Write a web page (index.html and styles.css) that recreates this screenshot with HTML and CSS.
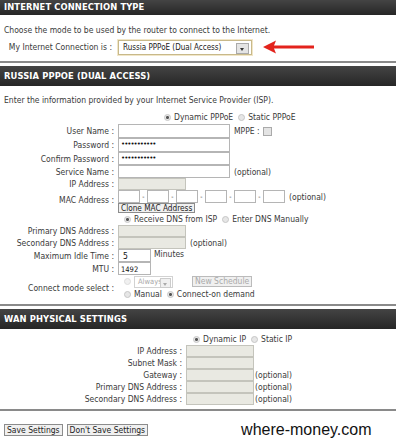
FILE: index.html
```html
<!DOCTYPE html>
<html>
<head>
    <title>Internet Connection</title>
    <link rel="stylesheet" href="styles.css">
</head>
<body>
    <!-- connection type -->
    <div class="box first-box">
        <h2 class="box-title first">INTERNET CONNECTION TYPE</h2>
        <div class="box-body">
            <p class="intro">Choose the mode to be used by the router to connect to the Internet.</p>
            <div class="mode-row">
                <span class="mode-label">My Internet Connection is :</span>
                <span class="select mode-select">Russia PPPoE (Dual Access)<span class="drop"></span></span>
                <svg class="pointer" width="54" height="14" viewBox="0 0 54 14">
                    <path d="M1 7 L14 0.5 L12 5.5 L52 5.5 L52 8.5 L12 8.5 L14 13.5 Z" fill="#e3231c"/>
                </svg>
            </div>
        </div>
    </div>

    <!-- pppoe -->
    <div class="box">
        <h2 class="box-title">RUSSIA PPPOE (DUAL ACCESS)</h2>
        <div class="box-body">
            <p class="intro second">Enter the information provided by your Internet Service Provider (ISP).</p>
            <div class="form">
                <span class="label"></span>
                <div class="field radios short indent">
                    <span class="radio on"></span>Dynamic PPPoE
                    <span class="radio"></span>Static PPPoE
                </div>

                <span class="label">User Name :</span>
                <div class="field"><span class="input w111 tall"></span><span class="note">MPPE :</span><span class="check"></span></div>

                <span class="label">Password :</span>
                <div class="field"><span class="input w111 tall dots">•••••••••••</span></div>

                <span class="label">Confirm Password :</span>
                <div class="field"><span class="input w111 dots">•••••••••••</span></div>

                <span class="label">Service Name :</span>
                <div class="field"><span class="input w111"></span><span class="note">(optional)</span></div>

                <span class="label">IP Address :</span>
                <div class="field"><span class="input w67 off"></span></div>

                <span class="label mac-label">MAC Address :</span>
                <div class="field col">
                    <div class="mac">
                        <span class="input w22"></span><i>-</i>
                        <span class="input w22"></span><i>-</i>
                        <span class="input w22"></span><i>-</i>
                        <span class="input w22"></span><i>-</i>
                        <span class="input w22"></span><i>-</i>
                        <span class="input w22"></span>
                        <span class="note">(optional)</span>
                    </div>
                    <span class="btn clone">Clone MAC Address</span>
                </div>

                <span class="label"></span>
                <div class="field radios short dns">
                    <span class="radio on"></span>Receive DNS from ISP
                    <span class="radio"></span>Enter DNS Manually
                </div>

                <span class="label">Primary DNS Address :</span>
                <div class="field"><span class="input w67 off"></span></div>

                <span class="label">Secondary DNS Address :</span>
                <div class="field"><span class="input w67 off"></span><span class="note">(optional)</span></div>

                <span class="label">Maximum Idle Time :</span>
                <div class="field"><span class="input w33 val">5</span><span class="note top">Minutes</span></div>

                <span class="label">MTU :</span>
                <div class="field"><span class="input w33 val small">1492</span></div>

                <span class="label">Connect mode select :</span>
                <div class="field col">
                    <div class="mode-line">
                        <span class="radio dim"></span>
                        <span class="select small-select">Always<span class="drop"></span></span>
                        <span class="btn dim-btn">New Schedule</span>
                    </div>
                    <div class="mode-line radios">
                        <span class="radio"></span>Manual
                        <span class="radio on"></span>Connect-on demand
                    </div>
                </div>
            </div>
        </div>
    </div>

    <!-- wan -->
    <div class="box">
        <h2 class="box-title">WAN PHYSICAL SETTINGS</h2>
        <div class="box-body">
            <div class="form wan">
                <span class="label"></span>
                <div class="field radios short">
                    <span class="radio on"></span>Dynamic IP
                    <span class="radio"></span>Static IP
                </div>

                <span class="label">IP Address :</span>
                <div class="field"><span class="input w67 off"></span></div>

                <span class="label">Subnet Mask :</span>
                <div class="field"><span class="input w67 off"></span></div>

                <span class="label">Gateway :</span>
                <div class="field"><span class="input w67 off"></span><span class="note tight">(optional)</span></div>

                <span class="label">Primary DNS Address :</span>
                <div class="field"><span class="input w67 off"></span><span class="note tight">(optional)</span></div>

                <span class="label">Secondary DNS Address :</span>
                <div class="field"><span class="input w67 off"></span><span class="note tight">(optional)</span></div>
            </div>
        </div>
    </div>

    <div class="footer">
        <span class="btn">Save Settings</span>
        <span class="btn">Don't Save Settings</span>
        <span class="site">where-money.com</span>
    </div>
</body>
</html>
```

FILE: styles.css
```css
/* page */
body {
    margin: 0;
    padding: 0;
    background-color: #fff;
    font-family: "DejaVu Sans Condensed", "Liberation Sans", sans-serif;
    font-size: 8.5px;
    color: #3a3a3a;
    width: 396px;
    height: 441px;
    overflow: hidden;
}

/* section boxes */
.box {
    border-bottom: 2px solid #8a8a8a;
    margin-bottom: 3px;
}

.box-title {
    margin: 0;
    height: 20px;
    line-height: 21px;
    padding-left: 4px;
    background: linear-gradient(#444, #262626);
    color: #fff;
    font-family: "DejaVu Sans", sans-serif;
    font-size: 8.4px;
    font-weight: bold;
    letter-spacing: 0.1px;
}

.box-title.first {
    height: 15px;
    line-height: 14px;
}

.box-body {
    padding-bottom: 4px;
}

.first-box .box-body {
    padding-bottom: 6px;
}

.intro {
    margin: 0;
    padding: 9px 0 0 4px;
    height: 12px;
    line-height: 12px;
}

.intro.second {
    padding-top: 8px;
}

/* connection type row */
.mode-row {
    display: flex;
    align-items: center;
    height: 16px;
    margin-top: 3px;
}

.mode-label {
    width: 112px;
    padding-right: 6px;
    text-align: right;
}

.select {
    position: relative;
    box-sizing: border-box;
    display: inline-block;
    height: 15px;
    line-height: 13px;
    padding-left: 4px;
    border: 1px solid #c8b98a;
    background-color: #fff;
    font-size: 8px;
    color: #222;
}

.mode-select {
    width: 134px;
    box-shadow: 0 0 0 1px #f1e6c8;
}

.drop {
    position: absolute;
    right: 2px;
    top: 2px;
    width: 11px;
    height: 9px;
    border: 1px solid #aaa;
    background-color: #e4e4e4;
}

.drop::after {
    content: "";
    position: absolute;
    left: 3px;
    top: 4px;
    border-left: 2.5px solid transparent;
    border-right: 2.5px solid transparent;
    border-top: 3px solid #333;
}

.pointer {
    margin-left: 10px;
}

/* forms */
.form {
    display: grid;
    grid-template-columns: 114px 1fr;
    column-gap: 4px;
    margin-top: 5px;
}

.label {
    text-align: right;
    align-self: center;
    line-height: 12px;
    white-space: nowrap;
}

.field {
    display: flex;
    align-items: center;
}

.field.col {
    flex-direction: column;
    align-items: flex-start;
}

.input {
    box-sizing: border-box;
    display: inline-block;
    height: 13px;
    border: 1px solid #b5b5b5;
    background-color: #fff;
}

.input.tall {
    height: 14px;
}

.input.off {
    height: 12px;
    background-color: #e9e9e2;
    border-color: #c4c4bc;
}

.w111 { width: 112px; }
.w67 { width: 68px; }
.w33 { width: 33px; }
.w22 { width: 22px; }

.dots {
    font-family: "DejaVu Sans", sans-serif;
    font-size: 7px;
    line-height: 11px;
    padding-left: 2px;
    letter-spacing: -1px;
    color: #111;
}

.val {
    padding-left: 4px;
    line-height: 13px;
    color: #111;
}

.val.small {
    padding-left: 2px;
    font-size: 7.5px;
}

.note {
    margin-left: 4px;
    white-space: nowrap;
}

.note.top {
    align-self: flex-start;
    margin-left: 3px;
    line-height: 10px;
}

.note.tight {
    margin-left: 1px;
}

.check {
    display: inline-block;
    width: 7px;
    height: 7px;
    margin-left: 3px;
    border: 1px solid #aaa;
    background-color: #e4e4e4;
}

/* radios */
.radios {
    white-space: nowrap;
}

.short {
    height: 12px;
}

.indent {
    padding-left: 46px;
    margin-bottom: 1px;
}

.dns {
    padding-left: 6px;
}

.radio {
    box-sizing: border-box;
    display: inline-block;
    width: 7px;
    height: 7px;
    margin: 0 3px 0 5px;
    border-radius: 50%;
    border: 1px solid #c6c6c6;
    background-color: #e6e6e6;
}

.radios .radio:first-child {
    margin-left: 0;
}

.radio.on {
    background: radial-gradient(#555 0 1.3px, #e8e8e8 1.6px);
}

.radio.dim {
    border-color: #ddd;
    background-color: #f0f0f0;
}

/* mac row */
.mac {
    display: flex;
    align-items: center;
}

.mac i {
    font-style: normal;
    width: 7px;
    text-align: center;
    font-size: 7px;
}

.mac-label {
    align-self: start;
    margin-top: 4px;
}

/* buttons */
.btn {
    box-sizing: border-box;
    display: inline-block;
    height: 11px;
    line-height: 9px;
    padding: 0 2px;
    border: 1px solid #8c8c8c;
    background-color: #f0f0f0;
    color: #222;
    white-space: nowrap;
}

.clone {
    height: 10px;
    line-height: 8px;
    font-size: 8.2px;
}

/* connect mode */
.mode-line {
    display: flex;
    align-items: center;
    height: 13px;
    padding-left: 6px;
}

.mode-line + .mode-line {
    height: 12px;
}

.mode-line .radio {
    margin-left: 0;
}

.mode-line.radios .radio:last-child {
    margin-left: 5px;
}

.small-select {
    width: 39px;
    height: 12px;
    line-height: 10px;
    padding-left: 3px;
    border-color: #d2d2d2;
    font-size: 7.5px;
    color: #aaa;
}

.small-select .drop {
    top: 1px;
    right: 1px;
    width: 9px;
    height: 8px;
    border-color: #ccc;
    background-color: #f0f0f0;
}

.small-select .drop::after {
    left: 2px;
    border-top-color: #aaa;
}

.dim-btn {
    margin-left: 19px;
    border-color: #bbb;
    color: #aaa;
}

/* wan */
.wan {
    grid-template-columns: 182px 1fr;
    margin-top: 4px;
}

.wan .short {
    padding-left: 7px;
}

/* footer */
.footer {
    display: flex;
    align-items: flex-start;
    padding: 8px 0 0 4px;
}

.footer .btn {
    height: 12px;
    line-height: 10px;
    margin-right: 4px;
    margin-top: 2px;
}

.site {
    margin-left: 89px;
    font-family: "Liberation Sans", sans-serif;
    font-size: 16px;
    line-height: 16px;
    color: #111;
}
```
